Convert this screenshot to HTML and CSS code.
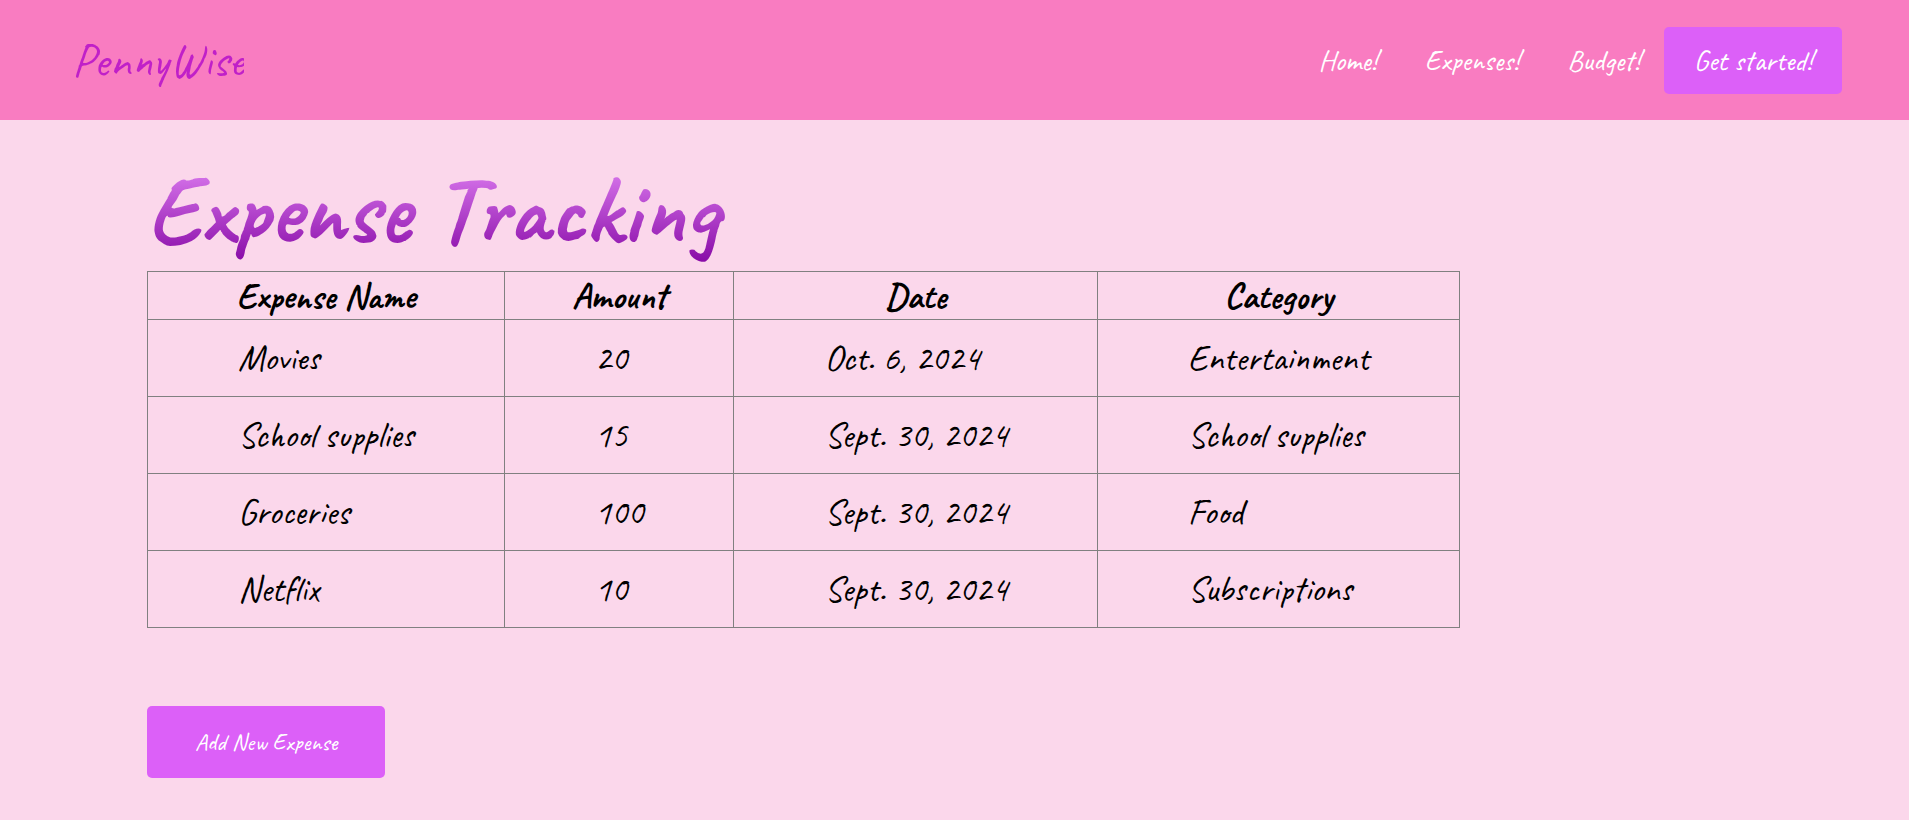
FILE: index.html
```html
<!DOCTYPE html>
<html lang="en">
<head>
<meta charset="utf-8">
<meta name="viewport" content="width=device-width, initial-scale=1">
<title>PennyWise</title>
<link rel="stylesheet" href="styles.css">
</head>
<body>
<header class="header">
  <a class="logo" href="#">PennyWise</a>
  <nav class="nav">
    <a class="nav-link" href="#">Home!</a>
    <a class="nav-link" href="#">Expenses!</a>
    <a class="nav-link" href="#">Budget!</a>
    <a class="nav-button" href="#">Get started!</a>
  </nav>
</header>
<main class="main">
  <h1 class="title">Expense Tracking</h1>
  <table class="expenses">
    <colgroup><col class="col-name"><col class="col-amount"><col class="col-date"><col class="col-category"></colgroup>
    <thead>
      <tr><th scope="col">Expense Name</th><th scope="col">Amount</th><th scope="col">Date</th><th scope="col">Category</th></tr>
    </thead>
    <tbody>
      <tr><td>Movies</td><td>20</td><td>Oct. 6, 2024</td><td>Entertainment</td></tr>
      <tr><td>School supplies</td><td>15</td><td>Sept. 30, 2024</td><td>School supplies</td></tr>
      <tr><td>Groceries</td><td>100</td><td>Sept. 30, 2024</td><td>Food</td></tr>
      <tr><td>Netflix</td><td>10</td><td>Sept. 30, 2024</td><td>Subscriptions</td></tr>
    </tbody>
  </table>
  <button class="add-button" type="button">Add New Expense</button>
</main>
</body>
</html>
```
FILE: styles.css
```css
* {
  box-sizing: border-box;
}

body {
  margin: 0;
  background: #fbd7eb;
  color: #000;
  font-family: Caveat, Lato, sans-serif;
}

.header {
  display: flex;
  align-items: center;
  justify-content: space-between;
  min-height: 120px;
  padding: 0 67px 0 72px;
  background: #f97cc1;
}

.logo {
  background: #c020c8;
  background-clip: text;
  -webkit-background-clip: text;
  color: transparent;
  font-size: 48px;
  line-height: 60px;
  text-decoration: none;
}

.nav {
  display: flex;
  align-items: center;
}

.nav-link,
.nav-button {
  color: #fff;
  font-size: 29px;
  font-weight: 500;
  line-height: 35px;
  text-decoration: none;
}

.nav-link {
  padding: 0 24px;
}

.nav-button {
  padding: 16px 30px;
  border-radius: 5px;
  background: #dc60f8;
}

.main {
  padding: 31px 147px 40px;
}

.title {
  width: fit-content;
  margin: 0;
  padding-right: 8px;
  background: linear-gradient(#e88cfa, #8000a0);
  background-clip: text;
  -webkit-background-clip: text;
  color: transparent;
  font-size: 96px;
  font-weight: 700;
  line-height: 120px;
}

.expenses {
  width: 81.3%;
  border-collapse: collapse;
  table-layout: fixed;
  font-size: 36px;
  line-height: 44px;
}

.expenses th,
.expenses td {
  border: 1px solid #808080;
}

.expenses th {
  height: 48px;
  padding: 0;
}

.expenses td {
  padding: 16px 0 16px 90px;
  text-align: left;
}

.col-name {
  width: 27.2%;
}

.col-amount {
  width: 17.5%;
}

.col-date {
  width: 27.7%;
}

.col-category {
  width: 27.6%;
}

.add-button {
  margin-top: 78px;
  padding: 21px 48px;
  border: 0;
  border-radius: 5px;
  background: #dc60f8;
  color: #fff;
  font: inherit;
  font-size: 24px;
  line-height: 30px;
}
```
